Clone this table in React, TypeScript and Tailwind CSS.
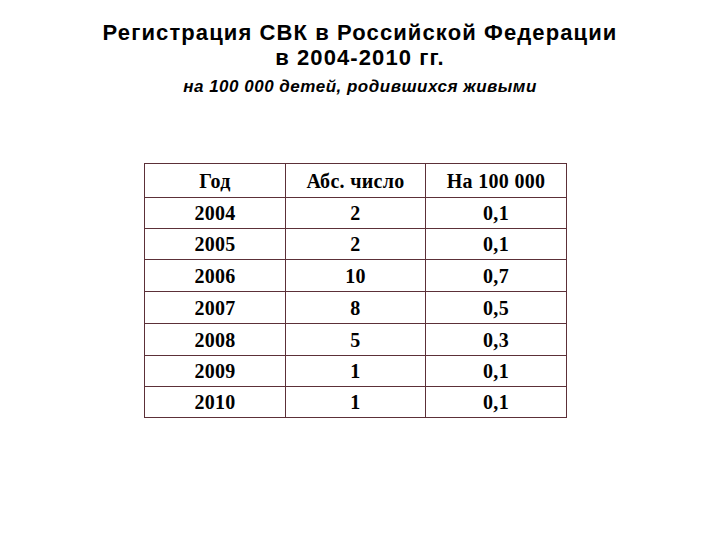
import React from "react";

const rows: [string, string, string][] = [
  ["2004", "2", "0,1"],
  ["2005", "2", "0,1"],
  ["2006", "10", "0,7"],
  ["2007", "8", "0,5"],
  ["2008", "5", "0,3"],
  ["2009", "1", "0,1"],
  ["2010", "1", "0,1"],
];

const rowH = ["h-[31px]", "h-[31px]", "h-[32px]", "h-[32px]", "h-[32px]", "h-[31px]", "h-[31px]"];

export default function App() {
  return (
    <div className="w-[720px] h-[540px] bg-white text-black flex flex-col">
      <div className="flex flex-col items-center pt-[20px] font-['Liberation_Sans',Arial,sans-serif]">
        <div className="text-[22px] leading-[25px] font-bold text-center tracking-[1.1px]">
          Регистрация СВК в Российской Федерации
        </div>
        <div className="text-[22px] leading-[25px] font-bold text-center tracking-[1.1px]">
          в 2004-2010 гг.
        </div>
        <div className="mt-[7px] text-[17px] leading-[20px] font-bold italic text-center tracking-[0.5px]">
          на 100 000 детей, родившихся живыми
        </div>
      </div>
      <div className="pl-[144px] pt-[66px]">
        <table className="border-collapse font-['Liberation_Serif','Times_New_Roman',serif] font-bold text-[20px] tracking-[0.3px]">
          <tbody>
            <tr className="h-[34px]">
              <td className="w-[141px] border border-[#5c3038] text-center p-0 leading-none">Год</td>
              <td className="w-[140px] border border-[#5c3038] text-center p-0 leading-none">Абс. число</td>
              <td className="w-[141px] border border-[#5c3038] text-center p-0 leading-none">На 100 000</td>
            </tr>
            {rows.map((r, i) => (
              <tr key={r[0]} className={rowH[i]}>
                {r.map((c, j) => (
                  <td key={j} className="border border-[#5c3038] text-center p-0 leading-none">
                    {c}
                  </td>
                ))}
              </tr>
            ))}
          </tbody>
        </table>
      </div>
    </div>
  );
}
